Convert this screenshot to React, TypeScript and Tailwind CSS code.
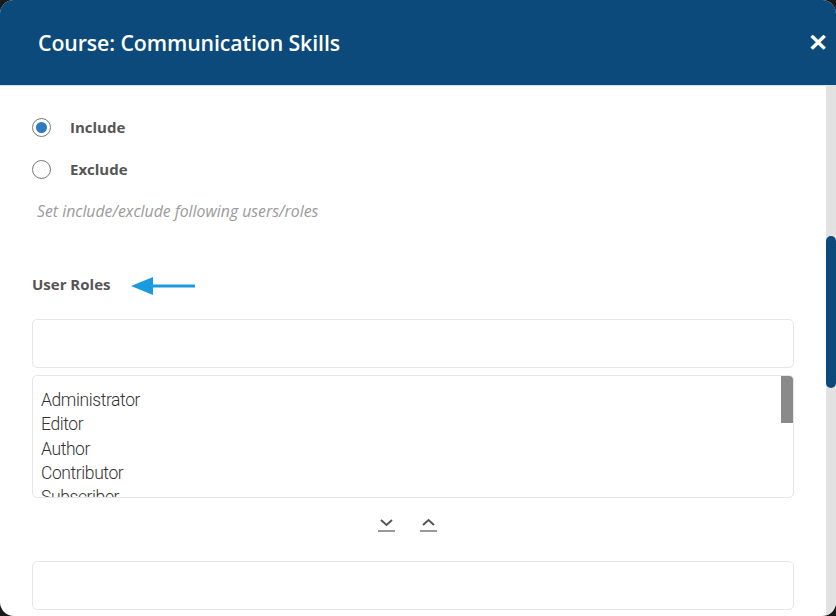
import React from "react";

export default function App() {
  const roles = ["Administrator", "Editor", "Author", "Contributor", "Subscriber"];
  return (
    <div className="w-[836px] h-[616px] bg-[#1a1a1a] overflow-hidden" style={{ fontFamily: '"Open Sans", "Noto Sans", sans-serif' }}>
      <div className="w-full h-full bg-white rounded-[14px] overflow-hidden flex flex-col">
        <div className="h-[86px] shrink-0 bg-[#0b4a7a] flex items-center justify-between pl-[38px] pr-[8px] border-b border-[#cfe3f0]">
          <h1 className="text-white text-[21.3px] font-semibold tracking-[-0.1px] pt-[1px]">Course: Communication Skills</h1>
          <span className="text-white text-[24px] font-bold leading-none pb-[2px]">✕</span>
        </div>
        <div className="flex flex-1 min-h-0">
          <div className="flex-1 pl-[32px] pr-[32px] pt-[31px]">
            <label className="flex items-center h-[20px] gap-[19px]">
              <span className="w-[19px] h-[19px] rounded-full border border-[#777] flex items-center justify-center">
                <span className="w-[11px] h-[11px] rounded-full bg-[#2f7ac0]" />
              </span>
              <span className="text-[15px] font-bold text-[#555]">Include</span>
            </label>
            <label className="flex items-center h-[20px] gap-[19px] mt-[22px]">
              <span className="w-[19px] h-[19px] rounded-full border border-[#777]" />
              <span className="text-[15px] font-bold text-[#555]">Exclude</span>
            </label>
            <p className="mt-[22px] pl-[5px] text-[15.8px] italic text-[#9a9a9a] leading-[20px]">Set include/exclude following users/roles</p>
            <div className="mt-[53px] flex items-center h-[20px]">
              <span className="text-[15px] font-bold text-[#555]">User Roles</span>
              <svg width="66" height="24" viewBox="0 0 66 24" className="ml-[21px] mt-[3px]">
                <line x1="16" y1="12" x2="64" y2="12" stroke="#1a9be0" strokeWidth="3" />
                <polygon points="0,12 22,3 22,21" fill="#1a9be0" />
              </svg>
            </div>
            <div className="mt-[25px] h-[49px] border border-[#e6e6e6] rounded-[5px]" />
            <div className="mt-[7px] h-[123px] border border-[#e6e6e6] rounded-[5px] overflow-hidden flex">
              <div className="flex-1 pl-[8px] pt-[12px] text-[17.5px] leading-[24.3px] tracking-[-0.4px] text-[#333] font-light" style={{ fontFamily: 'Roboto, "Open Sans", sans-serif' }}>
                {roles.map((r) => (
                  <div key={r}>{r}</div>
                ))}
              </div>
              <div className="w-[12px] flex flex-col">
                <div className="h-[47px] bg-[#8a8a8a]" />
              </div>
            </div>
            <div className="flex justify-center gap-[25px] mt-[19px] pr-[12px]">
              <svg width="17" height="16" viewBox="0 0 17 16">
                <polyline points="3,3 8.5,8 14,3" fill="none" stroke="#555" strokeWidth="2" />
                <line x1="0" y1="14" x2="17" y2="14" stroke="#555" strokeWidth="1.2" />
              </svg>
              <svg width="17" height="16" viewBox="0 0 17 16">
                <polyline points="3,8 8.5,3 14,8" fill="none" stroke="#555" strokeWidth="2" />
                <line x1="0" y1="14" x2="17" y2="14" stroke="#555" strokeWidth="1.2" />
              </svg>
            </div>
            <div className="mt-[28px] h-[49px] border border-[#e6e6e6] rounded-[5px]" />
          </div>
          <div className="w-[10px] bg-[#e2e2e2] pt-[150px]">
            <div className="h-[152px] bg-[#0b4a7a] rounded-[5px]" />
          </div>
        </div>
      </div>
    </div>
  );
}
